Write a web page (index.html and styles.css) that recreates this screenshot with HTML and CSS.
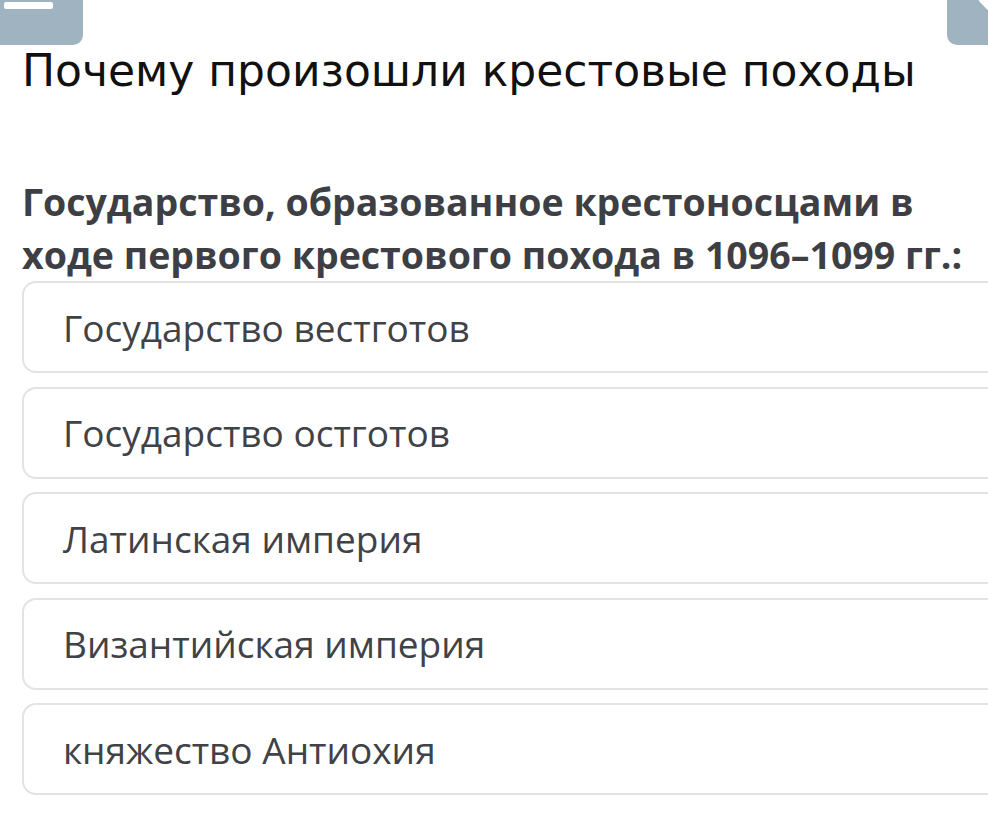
FILE: index.html
```html
<!DOCTYPE html>
<html lang="ru">

<head>
    <meta charset="UTF-8">
    <meta name="viewport" content="width=device-width, initial-scale=1.0">
    <title>Почему произошли крестовые походы</title>
    <link rel="stylesheet" href="styles.css">
</head>

<body>
    <div class="topbar">
        <div class="nav-btn nav-left">
            <span class="bar"></span>
        </div>
        <div class="nav-btn nav-right">
            <span class="arrow"></span>
        </div>
    </div>

    <div class="page">
        <h1 class="title">Почему произошли крестовые походы</h1>

        <h2 class="question">Государство, образованное крестоносцами в ходе первого крестового похода в 1096–1099 гг.:</h2>

        <div class="answers">
            <div class="answer">Государство вестготов</div>
            <div class="answer">Государство остготов</div>
            <div class="answer">Латинская империя</div>
            <div class="answer">Византийская империя</div>
            <div class="answer">княжество Антиохия</div>
        </div>
    </div>
</body>

</html>
```

FILE: styles.css
```css
body {
    margin: 0;
    padding: 0;
    background-color: #fff;
    font-family: "Open Sans", Arial, sans-serif;
    overflow: hidden;
}

.topbar {
    display: flex;
    justify-content: space-between;
    height: 45px;
}

.nav-btn {
    background-color: #9fb3c1;
    height: 45px;
    position: relative;
    overflow: hidden;
}

.nav-left {
    width: 83px;
    border-bottom-right-radius: 10px;
}

.nav-left .bar {
    position: absolute;
    left: 4px;
    top: 2px;
    width: 49px;
    height: 7px;
    background-color: #fff;
    border-radius: 2px;
}

.nav-right {
    width: 41px;
    border-bottom-left-radius: 10px;
}

.nav-right .arrow {
    position: absolute;
    left: 34px;
    top: -8px;
    width: 16px;
    height: 16px;
    background-color: #fff;
    border-radius: 3px;
    transform: rotate(45deg);
}

.page {
    padding: 0 0 0 22px;
}

.title {
    font-family: "DejaVu Sans", sans-serif;
    font-weight: normal;
    font-size: 44px;
    color: #111;
    margin: -2px 0 0 0;
    line-height: 56px;
}

.question {
    font-size: 37.5px;
    font-weight: bold;
    color: #3d3f44;
    line-height: 53px;
    margin: 76px 0 0 0;
    width: 960px;
}

.answers {
    display: flex;
    flex-direction: column;
    gap: 13.5px;
    margin-top: 0;
    margin-right: -40px;
}

.answer {
    height: 88px;
    border: 2px solid #e3e3e3;
    border-radius: 14px;
    padding-left: 39px;
    display: flex;
    align-items: center;
    font-size: 37px;
    color: #3f4246;
}
```
